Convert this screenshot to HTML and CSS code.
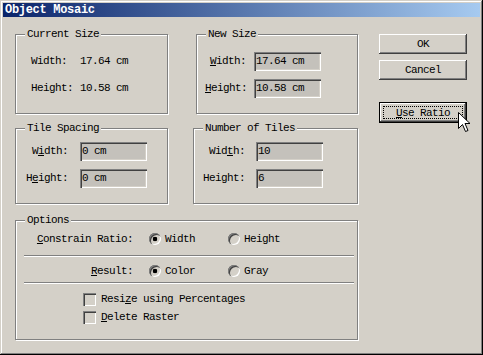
FILE: index.html
```html
<!DOCTYPE html>
<html lang="en">

<head>
    <meta charset="UTF-8">
    <title>Object Mosaic</title>
    <link rel="stylesheet" href="styles.css">
</head>

<body>
    <div class="window">
        <div class="titlebar">Object Mosaic</div>
        <div class="content">
            <div class="main">
                <div class="group-row">
                    <div class="group current-size">
                        <div class="group-title">Current Size</div>
                        <div class="fields">
                            <div class="field"><span class="label">Width:</span>17.64 cm</div>
                            <div class="field"><span class="label">Height:</span>10.58 cm</div>
                        </div>
                    </div>
                    <div class="group new-size">
                        <div class="group-title">New Size</div>
                        <div class="fields">
                            <div class="field"><span class="label"><u>W</u>idth:</span><input class="text-box" value="17.64 cm"></div>
                            <div class="field"><span class="label"><u>H</u>eight:</span><input class="text-box" value="10.58 cm"></div>
                        </div>
                    </div>
                </div>
                <div class="group-row second">
                    <div class="group tile-spacing">
                        <div class="group-title">Tile Spacing</div>
                        <div class="fields">
                            <div class="field"><span class="label">W<u>i</u>dth:</span><input class="text-box" value="0 cm"></div>
                            <div class="field"><span class="label">H<u>e</u>ight:</span><input class="text-box" value="0 cm"></div>
                        </div>
                    </div>
                    <div class="group tile-count">
                        <div class="group-title">Number of Tiles</div>
                        <div class="fields">
                            <div class="field"><span class="label">Wid<u>t</u>h:</span><input class="text-box" value="10"></div>
                            <div class="field"><span class="label">Hei<u>g</u>ht:</span><input class="text-box" value="6"></div>
                        </div>
                    </div>
                </div>
                <div class="group options">
                    <div class="group-title">Options</div>
                    <div class="opt-row first">
                        <span class="opt-label"><u>C</u>onstrain Ratio:</span>
                        <span class="radio-option"><span class="radio on"></span>Width</span>
                        <span class="radio-option"><span class="radio"></span>Height</span>
                    </div>
                    <div class="separator"></div>
                    <div class="opt-row">
                        <span class="opt-label"><u>R</u>esult:</span>
                        <span class="radio-option"><span class="radio on"></span>Color</span>
                        <span class="radio-option"><span class="radio"></span>Gray</span>
                    </div>
                    <div class="separator short"></div>
                    <div class="checks">
                        <div class="check-row"><span class="check"></span>Resi<u>z</u>e using Percentages</div>
                        <div class="check-row"><span class="check"></span><u>D</u>elete Raster</div>
                    </div>
                </div>
            </div>
            <div class="buttons">
                <button class="btn">OK</button>
                <button class="btn cancel">Cancel</button>
                <button class="btn default"><span class="focus"><u>U</u>se Ratio</span></button>
            </div>
        </div>
        <svg class="cursor" width="13" height="21" viewBox="0 0 13 21">
            <path d="M0.5 0.5 L0.5 16.5 L4.5 12.5 L7.5 19.5 L10 18.5 L7 11.5 L12 11.5 Z" fill="#fff" stroke="#000" stroke-width="1"/>
        </svg>
    </div>
</body>

</html>
```

FILE: styles.css
```css
body {
    margin: 0;
    background: #d4d0c8;
    font-family: "Liberation Mono", "DejaVu Sans Mono", monospace;
    font-size: 11px;
    letter-spacing: -0.6px;
    color: #000;
}

.window {
    position: relative;
    width: 483px;
    height: 355px;
    box-sizing: border-box;
    padding: 3px;
    background: #d4d0c8;
    box-shadow: inset -1px -1px #000, inset 1px 1px #d4d0c8, inset -2px -2px #808080, inset 2px 2px #fff;
}

.titlebar {
    height: 14px;
    line-height: 14px;
    padding-left: 2px;
    background: linear-gradient(to right, #0a246a, #a6caf0);
    color: #fff;
    font-weight: bold;
    font-size: 12px;
    letter-spacing: -0.3px;
}

.content {
    display: flex;
    padding: 17px 0 0 12px;
}

.main {
    width: 343px;
}

.group-row {
    display: flex;
}

.group-row.second {
    margin-top: 14px;
}

.group {
    box-sizing: border-box;
    border: 1px solid #808080;
    box-shadow: inset 1px 1px #fff, 1px 1px #fff;
}

.group-title {
    display: table;
    height: 14px;
    line-height: 14px;
    margin: -8px 0 0 9px;
    padding: 0 2px;
    background: #d4d0c8;
}

.fields {
    display: grid;
    gap: 8px;
    margin-top: 11px;
}

.second .fields {
    margin-top: 7px;
}

.field {
    display: flex;
    align-items: center;
    height: 19px;
    line-height: 19px;
}

.current-size {
    width: 153px;
    height: 80px;
    margin-right: 28px;
}

.current-size .label {
    width: 49px;
    padding-left: 15px;
}

.new-size {
    width: 162px;
    height: 80px;
}

.new-size .label {
    width: 41px;
    margin: 0 8px 0 8px;
    text-align: right;
}

.tile-spacing {
    width: 153px;
    height: 76px;
    margin-right: 25px;
}

.tile-spacing .label {
    width: 52px;
    margin-right: 12px;
    text-align: right;
}

.tile-count {
    width: 165px;
    height: 76px;
}

.tile-count .label {
    width: 51px;
    margin-right: 11px;
    text-align: right;
}

.text-box {
    width: 67px;
    height: 19px;
    box-sizing: border-box;
    margin: 0;
    padding: 0 2px;
    border: none;
    outline: none;
    background: #c4c1bb;
    font: inherit;
    letter-spacing: inherit;
    color: #000;
    box-shadow: inset 1px 1px #808080, inset 2px 2px #404040, inset -1px -1px #fff, inset -2px -2px #d4d0c8;
}

.options {
    width: 343px;
    height: 120px;
    margin-top: 16px;
}

.opt-row {
    display: flex;
    align-items: center;
    height: 16px;
    margin-top: 6px;
}

.opt-row.first {
    margin-top: 4px;
}

.opt-label {
    width: 117px;
    margin-right: 16px;
    text-align: right;
}

.radio-option {
    display: flex;
    align-items: center;
    width: 79px;
}

.radio {
    width: 12px;
    height: 12px;
    margin-right: 4px;
    border-radius: 50%;
    background: #d4d0c8;
    box-shadow: inset 1px 1px #808080, inset 2px 2px #404040, inset -1px -1px #fff, inset -2px -2px #d4d0c8;
}

.radio.on {
    background: radial-gradient(circle, #000 2px, #d4d0c8 2.6px);
}

.separator {
    border-top: 1px solid #808080;
    border-bottom: 1px solid #fff;
    margin: 8px 3px 0 8px;
}

.separator.short {
    margin-top: 3px;
}

.checks {
    display: grid;
    gap: 2px;
    margin: 7px 0 0 67px;
}

.check-row {
    display: flex;
    align-items: center;
    height: 16px;
}

.check {
    width: 13px;
    height: 13px;
    margin-right: 5px;
    background: #d4d0c8;
    box-shadow: inset 1px 1px #808080, inset 2px 2px #404040, inset -1px -1px #fff, inset -2px -2px #d4d0c8;
}

.buttons {
    display: flex;
    flex-direction: column;
    margin-left: 21px;
}

.btn {
    width: 88px;
    height: 20px;
    margin: 0;
    padding: 0;
    border: none;
    background: #d4d0c8;
    font: inherit;
    letter-spacing: inherit;
    color: #000;
    box-shadow: inset -1px -1px #404040, inset 1px 1px #fff, inset -2px -2px #808080, inset 2px 2px #d4d0c8;
}

.btn.cancel {
    margin-top: 6px;
}

.btn.default {
    height: 21px;
    margin-top: 22px;
    padding: 3px 4px;
    box-shadow: inset 0 0 0 1px #000, inset -2px -2px #404040, inset 2px 2px #fff, inset -3px -3px #808080;
}

.focus {
    display: block;
    height: 13px;
    line-height: 13px;
    border: 1px dotted #000;
    box-sizing: border-box;
}

.cursor {
    position: absolute;
    left: 458px;
    top: 112px;
}
```
